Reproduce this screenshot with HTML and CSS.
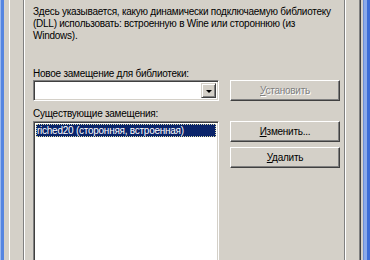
FILE: index.html
```html
<!DOCTYPE html>
<html lang="ru">
  <head>
    <meta charset="utf-8">
    <meta name="viewport" content="width=device-width">
    <title>Библиотеки</title>
    <link rel="stylesheet" href="styles.css">
  </head>

<body>
  <div class="window">
    <div class="frame">
      <div class="page">
        <div class="tab">
          <div class="group">
            <p class="intro">Здесь указывается, какую динамически подключаемую библиотеку<br>(DLL) использовать: встроенную в Wine или стороннюю (из<br>Windows).</p>

            <label class="caption caption-new" for="newdll">Новое замещение для библиотеки:</label>
            <div class="row">
              <div class="combo" id="newdll">
                <div class="combo-field"></div>
                <div class="combo-btn"><span class="arrow"></span></div>
              </div>
              <button class="btn" disabled><u>У</u>становить</button>
            </div>

            <div class="caption caption-list">Существующие замещения:</div>
            <div class="row">
              <div class="listbox">
                <div class="item selected">riched20 (сторонняя, встроенная)</div>
              </div>
              <div class="side">
                <button class="btn"><u>И</u>зменить...</button>
                <button class="btn"><u>У</u>далить</button>
              </div>
            </div>
          </div>
        </div>
      </div>
    </div>
  </div>
</body>

</html>
```

FILE: styles.css
```css
body {
  margin: 0;
  background: #d4d0c8;
  font: 10px "Liberation Sans", Arial, sans-serif;
  letter-spacing: -0.25px;
  color: #000;
}

/* window frame, cut on both sides */
.window {
  width: 370px;
  height: 260px;
  box-sizing: border-box;
  overflow: hidden;
  border-left: 1px solid #9ab8ee;
  border-right: 3px solid #3d6dd6;
}

.frame {
  height: 100%;
  border-left: 3px solid #5585e0;
  border-right: 3px solid #8aaaea;
}

.page {
  height: 100%;
  padding: 0 2px 0 5px;
  border-right: 1px solid #6d8fd6;
}

/* tab sheet */
.tab {
  height: 100%;
  padding: 0 14px 0 13px;
  border-left: 1px solid #fff;
  border-right: 1px solid #404040;
  box-shadow: inset -1px 0 #808080;
}

/* etched group frame */
.group {
  height: 100%;
  padding: 6px 5px 0 9px;
  border-left: 1px solid #808080;
  border-right: 1px solid #fff;
  box-shadow: inset 1px 0 #fff, inset -1px 0 #808080;
}

.intro {
  margin: 0;
  line-height: 12px;
  white-space: nowrap;
}

.caption {
  display: block;
  line-height: 13px;
}

.caption-new {
  margin: 25px 0 0;
}

.caption-list {
  margin: 6px 0 1px;
}

.row {
  display: flex;
  align-items: flex-start;
  gap: 11px;
}

/* sunken controls */
.combo,
.listbox {
  width: 186px;
  box-sizing: border-box;
  border: 1px solid;
  border-color: #808080 #fff #fff #808080;
  box-shadow: inset 1px 1px #404040, inset -1px -1px #d4d0c8;
  background: #fff;
  padding: 2px;
}

.combo {
  height: 21px;
  display: flex;
}

.combo-field {
  flex: 1;
}

.combo-btn {
  width: 15px;
  box-sizing: border-box;
  background: #d4d0c8;
  border: 1px solid;
  border-color: #d4d0c8 #404040 #404040 #d4d0c8;
  box-shadow: inset 1px 1px #fff, inset -1px -1px #808080;
  display: flex;
  align-items: center;
  justify-content: center;
}

.arrow {
  width: 0;
  height: 0;
  border-left: 3px solid transparent;
  border-right: 3px solid transparent;
  border-top: 3px solid #000;
  margin-top: 1px;
}

.listbox {
  height: 170px;
}

.item {
  height: 13px;
  line-height: 13px;
  padding-left: 1px;
  white-space: nowrap;
}

.item.selected {
  background: #0a246a;
  color: #fff;
  outline: 1px dotted #d8d8a8;
  outline-offset: -1px;
}

.side {
  display: flex;
  flex-direction: column;
  gap: 5px;
}

/* raised push buttons */
.btn {
  width: 110px;
  height: 21px;
  padding: 0;
  font: inherit;
  letter-spacing: inherit;
  color: #000;
  background: #d4d0c8;
  border: 1px solid;
  border-color: #fff #404040 #404040 #fff;
  box-shadow: inset -1px -1px #808080;
}

.btn:disabled {
  color: #808080;
  text-shadow: 1px 1px #fff;
}
```
